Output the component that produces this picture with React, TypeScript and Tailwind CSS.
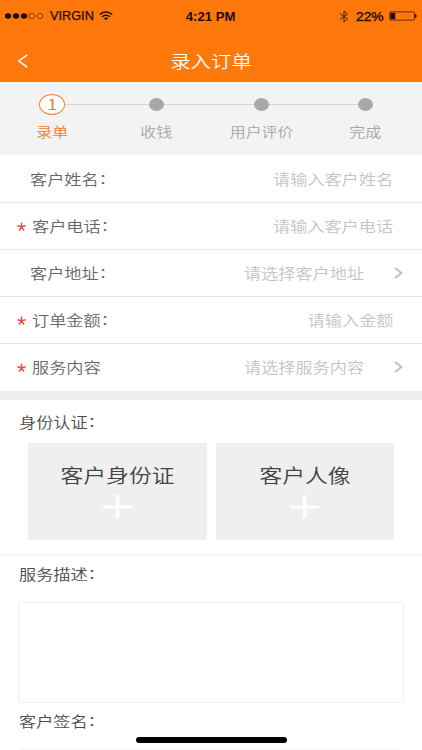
import { clsx } from "clsx";
import type { ReactNode } from "react";

type Field = {
  label: string;
  placeholder: string;
  required?: boolean;
  colon?: boolean;
  picker?: boolean;
};

const fields: Field[] = [
  { label: "客户姓名", placeholder: "请输入客户姓名", colon: true },
  { label: "客户电话", placeholder: "请输入客户电话", colon: true, required: true },
  { label: "客户地址", placeholder: "请选择客户地址", colon: true, picker: true },
  { label: "订单金额", placeholder: "请输入金额", colon: true, required: true },
  { label: "服务内容", placeholder: "请选择服务内容", required: true, picker: true }
];

const steps = ["录单", "收钱", "用户评价", "完成"];

// The interface uses a wide cut of the typeface
function Wide({ children, className }: { children: ReactNode; className?: string }) {
  return <span className={clsx("inline-block scale-x-[1.2] whitespace-nowrap", className)}>{children}</span>;
}

function Colon() {
  return <span className="relative -top-[1.5px]">：</span>;
}

function StatusBar() {
  return (
    <div className="grid h-8 grid-cols-[1fr_auto_1fr] items-center pl-[4px] pr-[5px] font-['Liberation_Sans',Arial,sans-serif] text-[12px] text-[#1d0d00]">
      <div className="flex items-center">
        <svg width="39" height="8" viewBox="0 0 39 8">
          <g fill="currentColor">
            <ellipse cx="4" cy="4" rx="3.2" ry="2.8" />
            <ellipse cx="12" cy="4" rx="3.2" ry="2.8" />
            <ellipse cx="20" cy="4" rx="3.2" ry="2.8" />
          </g>
          <g fill="none" stroke="currentColor" strokeWidth="0.5">
            <ellipse cx="27.8" cy="4" rx="3" ry="2.6" />
            <ellipse cx="35.8" cy="4" rx="3" ry="2.6" />
          </g>
        </svg>
        <span className="ml-[7px] w-[45px] origin-left scale-x-[1.06] [-webkit-text-stroke:0.25px]">VIRGIN</span>
        <svg className="ml-[4px]" width="14" height="10" viewBox="0 0 14 10" fill="none" stroke="currentColor" strokeWidth="1.5">
          <path d="M0.8 3.5C4.2 0.1 9.8 0.1 13.2 3.5" />
          <path d="M3.2 5.7C5.3 3.7 8.7 3.7 10.8 5.7" />
          <path d="M4.8 7.3C6 6.2 8 6.2 9.2 7.3L7 9.3Z" fill="currentColor" stroke="none" />
        </svg>
      </div>
      <span className="origin-center scale-x-[1.1] pt-px font-bold">4:21 PM</span>
      <div className="flex items-center justify-end">
        <svg width="10" height="13" viewBox="0 0 10 13" fill="none" stroke="currentColor" strokeWidth="0.8">
          <path d="M1 3.5L8.5 9L5 12V1L8.5 4L1 9.5" />
        </svg>
        <span className="ml-[7px] w-[28px] origin-left scale-x-[1.15] pt-px [-webkit-text-stroke:0.35px]">22%</span>
        <svg className="ml-[5px]" width="28" height="10" viewBox="0 0 28 10">
          <rect x="0.7" y="0.9" width="24.8" height="8.2" rx="1.2" fill="none" stroke="currentColor" strokeWidth="0.7" />
          <rect x="1.4" y="1.8" width="4.8" height="6.4" fill="currentColor" />
          <path d="M26 3.2C28.2 3.7 28.2 6.3 26 6.8Z" fill="currentColor" />
        </svg>
      </div>
    </div>
  );
}

function Header() {
  return (
    <header className="h-[82px] bg-[#ff780b]">
      <StatusBar />
      <div className="grid h-[57px] grid-cols-[1fr_auto_1fr] items-center pl-[17px] pr-[18px] text-white">
        <svg width="12" height="14" viewBox="0 0 12 14" fill="none" stroke="currentColor" strokeWidth="1.5">
          <path d="M10.3 0.8L1.8 7L10.3 13.2" />
        </svg>
        <Wide className="text-[17px]">录入订单</Wide>
      </div>
    </header>
  );
}

function Stepper() {
  return (
    <div className="grid h-[73px] grid-cols-4 bg-[#f3f3f3] pr-[4px] text-[13.3px] text-[#a6a6a6]">
      {steps.map((step, index) => (
        <div key={step} className="flex flex-col items-center pt-[11px]">
          <div className="flex h-[23px] w-full items-center">
            <span className={clsx("h-px flex-1", index > 0 && "bg-[#d6d6d6]")} />
            {index === 0 ? (
              <span className="flex h-[21px] w-[26px] items-center justify-center rounded-[50%] border border-[#f58232] bg-white text-[15px] font-normal text-[#f47a26]">
                <Wide>1</Wide>
              </span>
            ) : (
              <span className="h-[13px] w-[15px] rounded-[50%] bg-[#a8a8a8]" />
            )}
            <span className={clsx("h-px flex-1", index < steps.length - 1 && "bg-[#d6d6d6]")} />
          </div>
          <Wide className={clsx("mt-[6px] leading-[20px]", index === 0 && "text-[#f47a26]")}>{step}</Wide>
        </div>
      ))}
    </div>
  );
}

function FieldRow({ field }: { field: Field }) {
  return (
    <div className="flex h-[47px] items-center border-b border-[#e8e8e8] pr-[18px] text-[14.3px] last:border-transparent">
      <div className={clsx("flex items-center", field.required ? "pl-[17px]" : "pl-[30px]")}>
        {field.required && (
          <svg className="mr-[6px]" width="9" height="9" viewBox="0 0 9 9" fill="none" stroke="#f04848" strokeWidth="1.4">
            <path d="M4.5 4.8V0.6M4.5 4.8L0.4 3.7M4.5 4.8L8.6 3.7M4.5 4.8L2 8.5M4.5 4.8L7 8.5" />
          </svg>
        )}
        <Wide className="origin-left text-[#666]">
          {field.label}
          {field.colon && <Colon />}
        </Wide>
      </div>
      <Wide className={clsx("ml-auto origin-right text-[#c3c3c7]", field.picker ? "mr-[30px]" : "mr-[11px]")}>{field.placeholder}</Wide>
      {field.picker && (
        <svg width="10" height="12" viewBox="0 0 10 12" fill="none" stroke="#bdbdbd" strokeWidth="1.7">
          <path d="M1 1L7.5 6L1 11" />
        </svg>
      )}
    </div>
  );
}

function UploadCard({ title }: { title: string }) {
  return (
    <button className="flex h-[97px] flex-col items-center bg-[#efefef] pt-[17px] text-[#444]">
      <Wide className="text-[19px] leading-[30px]">{title}</Wide>
      <svg className="mt-[4px]" width="29" height="25" viewBox="0 0 29 25" stroke="#fff">
        <path d="M0 13H29" strokeWidth="2.8" />
        <path d="M14.5 1V24.5" strokeWidth="3.8" />
      </svg>
    </button>
  );
}

function SectionLabel({ children }: { children: ReactNode }) {
  return (
    <h2 className="h-[20px] pl-[18.5px] text-[14.3px] leading-[20px] text-[#4c4c4c]">
      <Wide className="origin-left">
        {children}
        <Colon />
      </Wide>
    </h2>
  );
}

export default function App() {
  return (
    <div className="relative h-[750px] w-[422px] overflow-hidden bg-white font-['Noto_Sans_CJK_SC',sans-serif] font-[350]">
      <Header />
      <Stepper />
      <div className="h-[236px] pt-px">
        {fields.map((field) => (
          <FieldRow key={field.label} field={field} />
        ))}
      </div>
      <div className="h-[9px] bg-[#efefef]" />
      <section className="h-[156px] border-b-2 border-[#f5f5f5] pt-[12px]">
        <SectionLabel>身份认证</SectionLabel>
        <div className="mt-[11px] grid grid-cols-2 gap-[9px] pl-[28px] pr-[28px]">
          <UploadCard title="客户身份证" />
          <UploadCard title="客户人像" />
        </div>
      </section>
      <section className="pt-[8px]">
        <SectionLabel>服务描述</SectionLabel>
        <div className="ml-[18px] mr-[18px] mt-[18px] h-[101px] rounded-[3px] border-[1.5px] border-[#f0f0f0]" />
      </section>
      <section className="pt-[8px]">
        <SectionLabel>客户签名</SectionLabel>
        <div className="mx-[20px] mt-[18px] h-px bg-[#f5f5f5]" />
      </section>
      <div className="absolute bottom-[7px] left-[136px] h-[6px] w-[151px] rounded-full bg-black" />
    </div>
  );
}
